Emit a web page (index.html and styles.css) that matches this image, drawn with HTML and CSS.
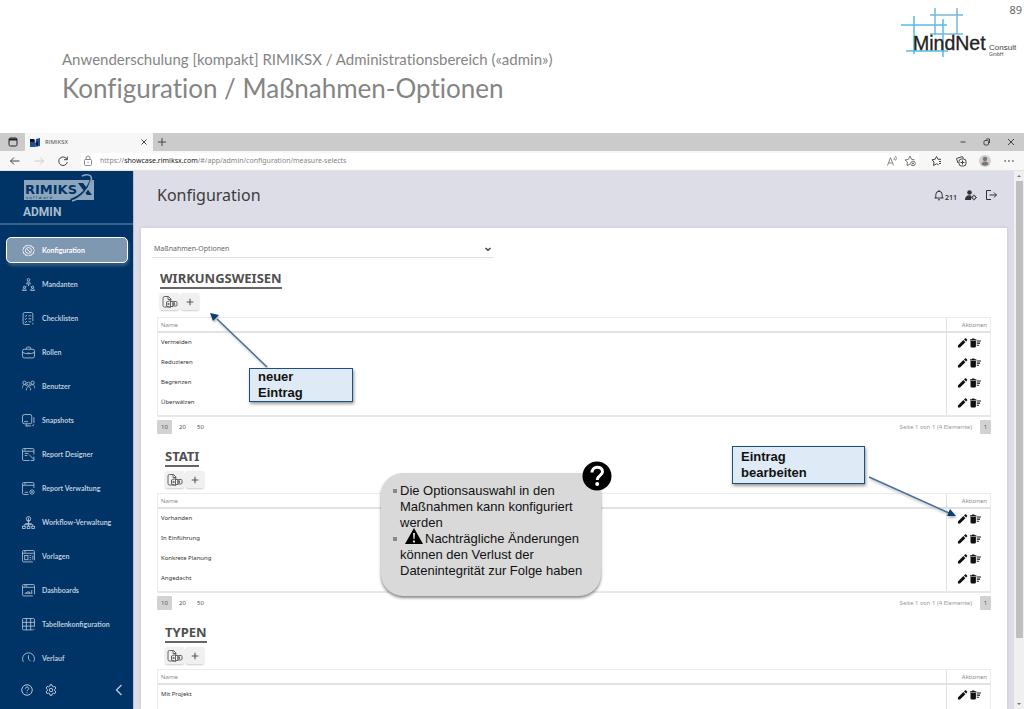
FILE: index.html
```html
<!DOCTYPE html>
<html lang="de">
<head>
<meta charset="utf-8">
<meta name="viewport" content="width=device-width, initial-scale=1">
<title>Konfiguration / Maßnahmen-Optionen</title>
<link rel="stylesheet" href="styles.css">
</head>
<body>
<svg class="sprite" aria-hidden="true">
  <symbol id="gear" viewBox="0 0 24 24"><path d="M12 1.5l2.2 2.3 3-1 1.200 2.900 3 .8-.1 3.200 2.200 2.300-2.200 2.300.1 3.200-3 .8-1.200 2.900-3-1-2.200 2.300-2.200-2.300-3 1-1.200-2.900-3-.8.1-3.200L.500 12l2.200-2.300-.1-3.200 3-.8 1.200-2.900 3 1z"/><circle cx="12" cy="12" r="5.500"/><path d="M9 9l6 6"/></symbol>
  <symbol id="mandanten" viewBox="0 0 24 24"><circle cx="12" cy="3.500" r="2.500"/><path d="M8.500 11c0-5 7-5 7 0zM12 11v4M8 15l-2 2M16 15l2 2"/><circle cx="4.500" cy="17" r="2"/><circle cx="19.500" cy="17" r="2"/><path d="M1 23c0-4.500 7-4.500 7 0zM16 23c0-4.500 7-4.500 7 0z"/></symbol>
  <symbol id="check" viewBox="0 0 24 24"><path d="M20 17V4a3 3 0 0 0-3-3H5a3 3 0 0 0-3 3v16a3 3 0 0 0 3 3h9M5 7l1.500 1.500L9 5.500M12 7h5M5 12.500L6.500 14 9 11M12 12.500h5M5 18l1.500 1.500L9 16.500M12 18h5M20 20v3"/></symbol>
  <symbol id="case" viewBox="0 0 24 24"><rect x="1" y="6" width="22" height="16" rx="3"/><path d="M8 6V4a2 2 0 0 1 2-2h4a2 2 0 0 1 2 2v2M1 12c7 3 15 3 22 0M10 13h4"/></symbol>
  <symbol id="users" viewBox="0 0 24 24"><circle cx="4.500" cy="5" r="3"/><circle cx="12" cy="7" r="3"/><circle cx="19.500" cy="5" r="3"/><path d="M0 16c0-6 3-7.500 5-7.500 2 0 3 1 4 2.500M24 16c0-6-3-7.500-5-7.500-2 0-3 1-4 2.500M8 19c0-9 8-9 8 0"/></symbol>
  <symbol id="snap" viewBox="0 0 24 24"><rect x="1" y="1" width="17" height="17" rx="3"/><path d="M6 22h11M22 6v11M19 22l3-3M8 18v2a2 2 0 0 0 2 2M4 14h7M21 22h1"/></symbol>
  <symbol id="designer" viewBox="0 0 24 24"><path d="M22 12V3a2 2 0 0 0-2-2H3a2 2 0 0 0-2 2v18a2 2 0 0 0 2 2h11M1 6h21M4 3.500h3M5 10h7M5 14h5M13 12l9 9M22 16v7h-6"/></symbol>
  <symbol id="verwalt" viewBox="0 0 24 24"><path d="M22 11V3a2 2 0 0 0-2-2H3a2 2 0 0 0-2 2v18a2 2 0 0 0 2 2h9M1 6h21M4 3.500h3M5 19h6"/><circle cx="18.500" cy="18.500" r="4"/><circle cx="18.500" cy="18.500" r="1"/></symbol>
  <symbol id="flow" viewBox="0 0 24 24"><circle cx="12" cy="5" r="4"/><path d="M12 3v13M9 8l3 3 3-3M6 14h12M4 19v-3h16v3M12 16v3"/><rect x="1" y="19" width="5" height="4"/><rect x="9.500" y="19" width="5" height="4"/><rect x="18" y="19" width="5" height="4"/></symbol>
  <symbol id="vorl" viewBox="0 0 24 24"><path d="M20 22H3a2 2 0 0 1-2-2V3a2 2 0 0 1 2-2h18a2 2 0 0 1 2 2v16M1 6h22M4 3.500h3M14 10h3M14 14h3M14 18h3M20 10v8"/><rect x="5" y="10" width="6" height="8"/></symbol>
  <symbol id="dash" viewBox="0 0 24 24"><path d="M20 22H3a2 2 0 0 1-2-2V3a2 2 0 0 1 2-2h18a2 2 0 0 1 2 2v16M1 6h22M4 3.500h6M8 17v-2M11 17v-4M14 17v-3M18 17v-6M5 17h14"/></symbol>
  <symbol id="grid" viewBox="0 0 24 24"><path d="M20 22H3a2 2 0 0 1-2-2V3a2 2 0 0 1 2-2h18a2 2 0 0 1 2 2v13M1 8h22M1 15h22M8 1v21M16 1v21M22 20v2"/></symbol>
  <symbol id="clock" viewBox="0 0 24 24"><path d="M5 21a11 11 0 1 1 14 0M12 6v7l4 4"/></symbol>
  <symbol id="help" viewBox="0 0 24 24"><circle cx="12" cy="12" r="10.500"/><path d="M8.500 9.500c0-4.500 7-4.500 7-.5 0 2.500-3.500 2.500-3.500 5M12 16.500v2"/></symbol>
  <symbol id="cog" viewBox="0 0 24 24"><circle cx="12" cy="12" r="3.500"/><path d="M10 1.500h4l.7 3.200 2 1.100 3.100-1 2 3.500-2.400 2.200v3l2.400 2.200-2 3.500-3.100-1-2 1.100-.7 3.200h-4l-.7-3.200-2-1.100-3.100 1-2-3.500 2.400-2.200v-3L2.200 8.300l2-3.500 3.100 1 2-1.100z"/></symbol>
  <symbol id="pencil" viewBox="0 0 24 24"><path fill="currentColor" stroke="none" d="M1 23v-5L14 5l5 5L6 23zM15.500 3.500L18 1c1-.8 1.800-.8 2.600 0L23 3.400c.8.8.8 1.600 0 2.600l-2.500 2.500z"/></symbol>
  <symbol id="trash" viewBox="0 0 26 24"><path fill="currentColor" stroke="none" d="M1 7h13v13a3 3 0 0 1-3 3H4a3 3 0 0 1-3-3zM0 3h4l1-2h5l1 2h4v3H0zM16 6h10v2.500H16zM16 11h8v2.500h-8zM16 16h5v2.500h-5z"/></symbol>
  <symbol id="excel" viewBox="0 0 32 24"><path d="M15 22H5a3 3 0 0 1-3-3V4a3 3 0 0 1 3-3h8l5 5v3M12 1v6h6M9 12l8-3v14l-8-3zM17 11h5v10h-5M11.500 14l3 4M14.500 14l-3 4"/><rect x="22" y="11" width="8" height="9" rx="2"/><path d="M25 13v5"/></symbol>
</svg>

<header class="slide-head">
  <div class="slide-titles">
    <p class="kicker">Anwenderschulung [kompakt] RIMIKSX / Administrationsbereich («admin»)</p>
    <h1 class="slide-title">Konfiguration / Maßnahmen-Optionen</h1>
  </div>
  <svg class="mindnet" viewBox="0 0 120 56" role="img" aria-label="MindNet Consult GmbH">
    <g stroke="#55bde6" stroke-width="1.500"><path d="M1 17h46M14 8v38M6 43h42M43 11v38"/><path stroke="#78b6da" d="M30 7h33M35 0v27M57 0v26M30 26h33"/></g>
    <text x="13" y="42" font-size="19.500" fill="#222" stroke="#222" stroke-width=".3">MindNet</text>
    <text x="89" y="42" font-size="8" fill="#444">Consult</text>
    <text x="89" y="48" font-size="5" fill="#444">GmbH</text>
  </svg>
  <span class="page-no">89</span>
</header>

<section class="browser">
  <div class="tabbar">
    <button class="tabmenu" aria-label="Tab-Aktionen"><svg viewBox="0 0 12 12"><rect x="2" y="2" width="8" height="8" rx="1.500"/><path stroke-width="2" d="M2 3.500h8"/></svg></button>
    <div class="tab">
      <svg class="favicon" viewBox="0 0 12 12"><path fill="#1e4f9a" stroke="none" d="M1 3h4l1 1v7H1zM7 3l4-1v8l-5 1z"/><path fill="#111" stroke="none" d="M1 3h4v3H1zM6 8l3-3v5z"/></svg>
      <span class="tab-name">RIMIKSX</span>
      <button class="ic" aria-label="Tab schließen"><svg viewBox="0 0 12 12"><path d="M3.500 3.500l5 5M8.500 3.500l-5 5"/></svg></button>
    </div>
    <button class="ic newtab" aria-label="Neuer Tab"><svg viewBox="0 0 12 12"><path d="M2 6h8M6 2v8"/></svg></button>
    <div class="winctl">
      <button class="ic" aria-label="Minimieren"><svg viewBox="0 0 12 12"><path d="M3.500 6h5"/></svg></button>
      <button class="ic" aria-label="Wiederherstellen"><svg viewBox="0 0 12 12"><rect x="3" y="4.500" width="4.500" height="4.500" rx="1"/><path d="M5 3h3.500v4"/></svg></button>
      <button class="ic" aria-label="Schließen"><svg viewBox="0 0 12 12"><path d="M3 3l6 6M9 3L3 9"/></svg></button>
    </div>
  </div>
  <div class="toolbar">
    <button class="ic" aria-label="Zurück"><svg viewBox="0 0 12 12"><path d="M10.500 6h-9M5 2.500L1.500 6 5 9.500"/></svg></button>
    <button class="ic pale" aria-label="Vorwärts"><svg viewBox="0 0 12 12"><path d="M1.500 6h9M7 2.500L10.500 6 7 9.500"/></svg></button>
    <button class="ic" aria-label="Neu laden"><svg viewBox="0 0 12 12"><path d="M10 4.500A4.300 4.300 0 1 0 10.300 7M10.300 1.500v3.200H7"/></svg></button>
    <div class="address">
      <svg class="lock" viewBox="0 0 12 12"><rect x="2.500" y="4.500" width="7" height="6" rx="1"/><path d="M4 4.500V3a2 2 0 0 1 4 0v1.500M6 7v1"/></svg>
      <div class="url" role="textbox" contenteditable="true" spellcheck="false" aria-label="Adresse">https://<b>showcase.rimiksx.com</b>/#/app/admin/configuration/measure-selects</div>
      <svg class="aloud" viewBox="0 0 12 12" role="img" aria-label="Laut vorlesen"><path d="M1.500 10.500L4.500 2.500l3 8M2.500 8h4M8 2.500q1 1 0 2.500M9.500 1q1.800 2.500 0 4.500"/></svg>
      <button class="ic grey" aria-label="Zu Favoriten hinzufügen"><svg viewBox="0 0 12 12"><path d="M6 9L3 10.500 3.500 7 1 5l3.300-.6L6 1l1.500 3.200 3 .6"/><circle cx="9" cy="8.500" r="2.300"/><path d="M9 7.500v2M8 8.500h2"/></svg></button>
    </div>
    <div class="tools">
      <button class="ic" aria-label="Favoriten"><svg viewBox="0 0 12 12"><path d="M7.500 9.800L5.500 8.800 2.500 10.500 3 7 1 4.800l3-.5L5.500 1.500 7 4.300h3M8 6.500h2M8 8.500h2"/></svg></button>
      <button class="ic" aria-label="Sammlungen"><svg viewBox="0 0 12 12"><path d="M3 8L1.500 3.500 7.500 1.500l.8 2"/><rect x="4" y="4" width="7" height="7" rx="2.500"/><path d="M7.500 5.500v4M5.500 7.500h4"/></svg></button>
      <button class="ic" aria-label="Profil"><svg viewBox="0 0 12 12"><circle cx="6" cy="6" r="6" fill="#cfcdc9" stroke="none"/><circle cx="6" cy="4" r="2.200" fill="#777" stroke="none"/><path d="M2.500 9.500c0-4 7-4 7 0-2 1.500-5 1.500-7 0z" fill="#777" stroke="none"/></svg></button>
      <button class="ic" aria-label="Mehr"><svg viewBox="0 0 12 12"><path stroke-width="1.300" d="M1.500 6h1.300M5.300 6h1.300M9.200 6h1.300"/></svg></button>
    </div>
  </div>

  <div class="app">
    <aside class="sidebar">
      <div class="brand">
        <svg class="logo" viewBox="0 0 72 30" role="img" aria-label="RIMIKSX software">
          <path fill="#8ea6bd" d="M1 6h70v20H1z"/>
          <text x="2" y="20" font-size="13" font-weight="700" fill="#003366">RIMIKS</text>
          <text x="3" y="25" font-size="4" fill="#003366">s o f t w a r e</text>
          <path fill="#003366" d="M55 9h5l9 12h-5zM47 25c10-3 18-12 20-20l2 1c-3 10-10 18-20 21z"/>
          <path d="M59 2c5-2 11-2 9 5-2 8-9 17-19 20" fill="none" stroke="#8ea6bd" stroke-width="1.500"/>
        </svg>
        <strong class="role">ADMIN</strong>
      </div>
      <nav class="menu">
        <a class="item active" href="#"><svg><use href="#gear"/></svg>Konfiguration</a>
        <a class="item" href="#"><svg><use href="#mandanten"/></svg>Mandanten</a>
        <a class="item" href="#"><svg><use href="#check"/></svg>Checklisten</a>
        <a class="item" href="#"><svg><use href="#case"/></svg>Rollen</a>
        <a class="item" href="#"><svg><use href="#users"/></svg>Benutzer</a>
        <a class="item" href="#"><svg><use href="#snap"/></svg>Snapshots</a>
        <a class="item" href="#"><svg><use href="#designer"/></svg>Report Designer</a>
        <a class="item" href="#"><svg><use href="#verwalt"/></svg>Report Verwaltung</a>
        <a class="item" href="#"><svg><use href="#flow"/></svg>Workflow-Verwaltung</a>
        <a class="item" href="#"><svg><use href="#vorl"/></svg>Vorlagen</a>
        <a class="item" href="#"><svg><use href="#dash"/></svg>Dashboards</a>
        <a class="item" href="#"><svg><use href="#grid"/></svg>Tabellenkonfiguration</a>
        <a class="item" href="#"><svg><use href="#clock"/></svg>Verlauf</a>
      </nav>
      <div class="side-foot">
        <button aria-label="Hilfe"><svg><use href="#help"/></svg></button>
        <button aria-label="Einstellungen"><svg><use href="#cog"/></svg></button>
        <button class="collapse" aria-label="Menü einklappen"><svg viewBox="0 0 12 12"><path stroke-width="1.300" d="M8.500 1L3.500 6l5 5"/></svg></button>
      </div>
    </aside>

    <main class="main">
      <div class="main-head">
        <h2 class="main-title">Konfiguration</h2>
        <div class="user">
          <button aria-label="Benachrichtigungen"><svg viewBox="0 0 12 12"><path d="M1.500 9h9M2.800 9V5.500a3.200 3.200 0 0 1 6.400 0V9M6 1v1.300M5 10.800h2"/></svg><span class="count">211</span></button>
          <button aria-label="Profil"><svg viewBox="0 0 12 12"><circle cx="4.500" cy="3.500" r="2.300" fill="currentColor" stroke="none"/><path fill="currentColor" stroke="none" d="M0 11c0-5 5-5.500 6.500-4L6 11z"/><circle cx="9" cy="8.500" r="1.800"/><path d="M9 5.700v1M9 10.300v1M6.300 8.500h1M10.800 8.500h1"/></svg></button>
          <button aria-label="Abmelden"><svg viewBox="0 0 12 12"><path d="M6 1.500H1.500v9H6M4.500 6h7M9 3.500L11.500 6 9 8.500"/></svg></button>
        </div>
      </div>
      <div class="panel">
        <div class="picker">
          <select aria-label="Bereich"><option>Maßnahmen-Optionen</option></select>
          <svg viewBox="0 0 12 12"><path stroke-width="1.500" d="M3.500 5L6 7.300 8.500 5"/></svg>
        </div>

        <section class="group first">
          <h3>WIRKUNGSWEISEN</h3>
          <div class="acts"><button aria-label="Excel-Export"><svg class="xl"><use href="#excel"/></svg></button><button aria-label="Neuer Eintrag"><svg viewBox="0 0 12 12"><path stroke-width="1.300" d="M2 6h8M6 2v8"/></svg></button></div>
          <table>
            <thead><tr><th>Name</th><th class="act">Aktionen</th></tr></thead>
            <tbody>
              <tr><td>Vermeiden</td><td class="act"><button aria-label="Bearbeiten"><svg><use href="#pencil"/></svg></button><button aria-label="Löschen"><svg><use href="#trash"/></svg></button></td></tr>
              <tr><td>Reduzieren</td><td class="act"><button aria-label="Bearbeiten"><svg><use href="#pencil"/></svg></button><button aria-label="Löschen"><svg><use href="#trash"/></svg></button></td></tr>
              <tr><td>Begrenzen</td><td class="act"><button aria-label="Bearbeiten"><svg><use href="#pencil"/></svg></button><button aria-label="Löschen"><svg><use href="#trash"/></svg></button></td></tr>
              <tr><td>Überwälzen</td><td class="act"><button aria-label="Bearbeiten"><svg><use href="#pencil"/></svg></button><button aria-label="Löschen"><svg><use href="#trash"/></svg></button></td></tr>
            </tbody>
          </table>
          <div class="pager"><button class="on">10</button><button>20</button><button>50</button><span>Seite 1 von 1 (4 Elemente)</span><button class="on page">1</button></div>
        </section>

        <section class="group">
          <h3>STATI</h3>
          <div class="acts"><button aria-label="Excel-Export"><svg class="xl"><use href="#excel"/></svg></button><button aria-label="Neuer Eintrag"><svg viewBox="0 0 12 12"><path stroke-width="1.300" d="M2 6h8M6 2v8"/></svg></button></div>
          <table>
            <thead><tr><th>Name</th><th class="act">Aktionen</th></tr></thead>
            <tbody>
              <tr><td>Vorhanden</td><td class="act"><button aria-label="Bearbeiten"><svg><use href="#pencil"/></svg></button><button aria-label="Löschen"><svg><use href="#trash"/></svg></button></td></tr>
              <tr><td>In Einführung</td><td class="act"><button aria-label="Bearbeiten"><svg><use href="#pencil"/></svg></button><button aria-label="Löschen"><svg><use href="#trash"/></svg></button></td></tr>
              <tr><td>Konkrete Planung</td><td class="act"><button aria-label="Bearbeiten"><svg><use href="#pencil"/></svg></button><button aria-label="Löschen"><svg><use href="#trash"/></svg></button></td></tr>
              <tr><td>Angedacht</td><td class="act"><button aria-label="Bearbeiten"><svg><use href="#pencil"/></svg></button><button aria-label="Löschen"><svg><use href="#trash"/></svg></button></td></tr>
            </tbody>
          </table>
          <div class="pager"><button class="on">10</button><button>20</button><button>50</button><span>Seite 1 von 1 (4 Elemente)</span><button class="on page">1</button></div>
        </section>

        <section class="group">
          <h3>TYPEN</h3>
          <div class="acts"><button aria-label="Excel-Export"><svg class="xl"><use href="#excel"/></svg></button><button aria-label="Neuer Eintrag"><svg viewBox="0 0 12 12"><path stroke-width="1.300" d="M2 6h8M6 2v8"/></svg></button></div>
          <table>
            <thead><tr><th>Name</th><th class="act">Aktionen</th></tr></thead>
            <tbody>
              <tr><td>Mit Projekt</td><td class="act"><button aria-label="Bearbeiten"><svg><use href="#pencil"/></svg></button><button aria-label="Löschen"><svg><use href="#trash"/></svg></button></td></tr>
              <tr><td></td><td class="act"></td></tr>
            </tbody>
          </table>
        </section>
      </div>
    </main>
    <div class="scroll" aria-hidden="true"><svg viewBox="0 0 10 10"><path d="M3 6l2-2 2 2z"/></svg><span class="thumb"></span><svg viewBox="0 0 10 10"><path d="M3 4l2 2 2-2z"/></svg></div>
  </div>
</section>

<svg class="arrow arrow-new" viewBox="0 0 62 58" aria-hidden="true"><path d="M57 54L7 6" stroke="#466f9b" stroke-width="1.500"/><path fill="#0b3d70" d="M0 0l9 2-6 6z"/></svg>
<svg class="arrow arrow-edit" viewBox="0 0 92 46" aria-hidden="true"><path d="M2 2l80 36" stroke="#466f9b" stroke-width="1.500"/><path fill="#0b3d70" d="M89 41l-9 0 3-7z"/></svg>
<div class="note note-new">neuer<br>Eintrag</div>
<div class="note note-edit">Eintrag<br>bearbeiten</div>
<div class="bubble">
  <ul>
    <li>Die Optionsauswahl in den<br>Maßnahmen kann konfiguriert<br>werden</li>
    <li><svg class="warn" viewBox="0 0 18 16"><path d="M9 0l9 16H0z"/><path fill="#d9d9d9" d="M8 5h2l-.4 6H8.400zM8 12.500h2v2H8z"/></svg>Nachträgliche Änderungen<br>können den Verlust der<br>Datenintegrität zur Folge haben</li>
  </ul>
  <svg class="qmark" viewBox="0 0 30 30" aria-hidden="true"><circle cx="15" cy="15" r="14.500"/><path d="M10 11.500c0-7 10.500-7 10.500-.8 0 4-5.300 4-5.300 8.300" fill="none" stroke="#fff" stroke-width="3"/><circle cx="15.200" cy="23" r="2" fill="#fff"/></svg>
</div>
</body>
</html>
```
FILE: styles.css
```css
* { box-sizing: border-box; }
body {
  position: relative;
  margin: 0;
  height: 100vh;
  overflow: hidden;
  display: flex;
  flex-direction: column;
  background: #fff;
  font-family: "Noto Sans", "Open Sans", sans-serif;
  color: #444;
}
button { margin: 0; padding: 0; border: 0; background: none; font: inherit; color: inherit; display: inline-flex; align-items: center; justify-content: center; }
svg { display: block; fill: none; stroke: currentColor; }
.sprite { display: none; }
h1, h2, h3, p, ul { margin: 0; padding: 0; }

/* Slide header */
.slide-head { flex: none; display: flex; align-items: flex-start; height: 133px; padding-left: 62px; }
.slide-titles { flex: 1; padding-top: 49px; font-family: Lato, sans-serif; font-variant-ligatures: none; color: #858585; }
.kicker { font-size: 15px; line-height: 20px; }
.slide-title { font-size: 26px; line-height: 38px; font-weight: 400; }
.mindnet { width: 120px; height: 56px; margin-top: 8px; margin-right: -11px; stroke: none; font-family: "Liberation Sans", sans-serif; }
.page-no { padding: 2px 2px 0 0; font-size: 11px; line-height: 16px; color: #666; }

/* Browser frame */
.browser { flex: 1; min-height: 0; display: flex; flex-direction: column; }
.ic svg { width: 12px; height: 12px; color: #444; }
.ic.pale svg { color: #ccc; }
.ic.grey svg { color: #777; }
.tabbar { flex: none; display: flex; align-items: center; height: 18px; background: #cbcbcb; }
.tabmenu { width: 25px; }
.tabmenu svg { width: 12px; height: 12px; color: #222; }
.tab { display: flex; align-items: center; gap: 4px; width: 128px; height: 18px; padding: 0 3px 0 4px; background: #f7f7f7; }
.favicon { width: 12px; height: 12px; }
.tab-name { flex: 1; font-family: "Open Sans", sans-serif; font-size: 6px; line-height: 12px; }
.newtab { margin-left: 3px; }
.winctl { display: flex; gap: 12px; margin-left: auto; padding-right: 7px; }
.toolbar { flex: none; display: flex; align-items: center; gap: 12px; height: 20px; padding: 0 9px; background: #f7f7f7; border-bottom: 1px solid #e4e4e4; }
.address { flex: 1; display: flex; align-items: center; height: 16px; padding: 0 3px 0 1px; gap: 6px; background: #fff; }
.lock { width: 12px; height: 12px; color: #888; }
.url { flex: 1; font-size: 7px; line-height: 12px; color: #858585; }
.url b { font-weight: 400; color: #222; }
.aloud { width: 12px; height: 12px; color: #888; }
.tools { display: flex; gap: 12px; }

/* Application */
.app { flex: 1; min-height: 0; display: flex; }
.sidebar { flex: none; display: flex; flex-direction: column; width: 134px; background: #003366; border-right: 1px solid #b9c0d6; color: #bccbda; }
.brand { flex: none; height: 54px; padding: 3px 24px 0 23px; border-bottom: 2px solid #34608a; }
.logo { width: 72px; height: 30px; stroke: none; font-family: "DejaVu Sans", sans-serif; }
.role { display: block; font-family: Roboto, sans-serif; font-size: 12px; line-height: 16px; color: #a9bccf; }
.menu { flex: 1; min-height: 0; overflow: hidden; display: flex; flex-direction: column; gap: 8px; padding: 12px 5px 0 6px; }
.item { flex: none; display: flex; align-items: center; gap: 7px; height: 26px; padding-left: 15px; border: 1px solid transparent; border-radius: 5px; font-family: Lato, sans-serif; font-size: 7px; line-height: 12px; font-weight: 700; color: #bccbda; text-decoration: none; }
.item svg { width: 13px; height: 13px; stroke-width: 1.5; }
.item.active { background: #7f98b2; border-color: #fff; color: #fff; box-shadow: 1px 3px 3px #33597f; }
.side-foot { flex: none; display: flex; align-items: center; gap: 12px; height: 47px; padding: 8px 8px 0 21px; }
.side-foot svg { width: 12px; height: 12px; stroke-width: 2; }
.side-foot .collapse { margin-left: auto; }

.main { flex: 1; min-width: 0; display: flex; flex-direction: column; background: #dddde8; padding: 0 7px; }
.main-head { flex: none; display: flex; align-items: center; justify-content: space-between; height: 57px; padding: 0 10px 10px 16px; }
.main-title { font-size: 16px; line-height: 24px; font-weight: 400; color: #3c3c3c; }
.user { display: flex; gap: 8px; color: #333; }
.user svg { width: 12px; height: 12px; }
.count { padding-top: 6px; font-size: 7px; line-height: 10px; font-weight: 600; }
.panel { flex: 1; min-height: 0; overflow: hidden; background: #fff; padding: 12px 16px 0; box-shadow: 0 0 3px #c4c4d2; }
.picker { display: grid; width: 41%; height: 18px; margin-left: -5px; border-bottom: 1px solid #e2e2e2; align-items: center; }
.picker select, .picker svg { grid-area: 1 / 1; }
.picker select { appearance: none; width: 100%; padding: 0 2px; border: 0; background: none; font-family: "Noto Sans", sans-serif; font-size: 7px; line-height: 16px; color: #666; }
.picker svg { width: 12px; height: 12px; justify-self: end; color: #444; pointer-events: none; }

.group { padding-top: 13px; }
.group.first { padding-top: 11px; }
.group h3 { width: max-content; margin-left: 8px; border-bottom: 2px solid #666; font-size: 13px; line-height: 18px; font-weight: 700; color: #505050; }
.acts { display: flex; gap: 2px; margin: 4px 0 5px 8px; }
.group.first h3 { margin-left: 3px; }
.group.first .acts { margin-left: 3px; margin-bottom: 7px; }
.acts button { width: 18px; height: 17px; border-radius: 2px; background: #f0f0f0; box-shadow: 0 1px 2px #ccc; color: #555; }
.acts button:first-child { width: 19px; }
.acts svg { width: 10px; height: 10px; }
.acts .xl { width: 16px; height: 12px; stroke-width: 1.8; }
table { width: 100%; border: 1px solid #ececec; border-bottom: 2px solid #e8e8e8; border-spacing: 0; font-size: 6px; line-height: 10px; color: #333; }
th { height: 15px; padding: 0 3px; border-bottom: 2px solid #e2e2e2; font-weight: 400; text-align: left; color: #8c8c8c; }
td { height: 20px; padding: 0 3px 3px; }
.act { width: 44px; border-left: 1px solid #e0e0e0; text-align: right; white-space: nowrap; }
td.act { padding: 0 9px 0 0; color: #111; }
tr:last-child td { height: 22px; padding-bottom: 5px; }
tr:last-child td.act { padding-bottom: 2px; }
td.act button { vertical-align: middle; }
td.act button + button { margin-left: 2px; }
td.act svg { width: 11px; height: 10px; }
.pager { display: flex; align-items: center; gap: 3px; margin-top: 3px; font-size: 6px; line-height: 10px; color: #555; }
.pager button { width: 15px; height: 14px; }
.pager .on { background: #d2d2d2; border-radius: 1px; }
.pager span { margin-left: auto; padding-right: 5px; color: #999; }
.pager .page { width: 11px; }

.scroll { flex: none; width: 10px; display: flex; flex-direction: column; background: #f0f0f0; }
.scroll svg { flex: none; width: 10px; height: 10px; fill: #777; stroke: none; }
.scroll .thumb { flex: 0 0 85%; margin: 0 1px 0 2px; background: #bfbfbf; }
.scroll svg:last-child { margin-top: auto; }

/* Annotations over the page */
.note, .bubble, .arrow { position: absolute; font-family: "Liberation Sans", Arial, sans-serif; font-size: 13px; line-height: 16px; color: #111; }
.note { padding: 0 8px; background: #deebf7; border: 1px solid #1f4e79; box-shadow: 1px 2px 3px #999; font-weight: 700; white-space: nowrap; }
.note-new { left: 249px; top: 368px; width: 104px; height: 34px; }
.note-edit { left: 732px; top: 446px; width: 133px; height: 38px; padding-top: 2px; }
.arrow { stroke: none; filter: drop-shadow(1px 2px 1px #bbb); }
.arrow-new { left: 210px; top: 313px; width: 62px; height: 58px; }
.arrow-edit { left: 867px; top: 475px; width: 92px; height: 46px; }
.bubble { left: 381px; top: 473px; width: 220px; height: 123px; padding: 10px 4px 0 19px; background: #d9d9d9; border-radius: 22px; box-shadow: 0 2px 3px #888; white-space: nowrap; }
.bubble ul { list-style: none; }
.bubble li::before { content: ""; float: left; width: 4px; height: 4px; margin: 6px 0 0 -7px; background: #888; }
.warn { display: inline-block; width: 18px; height: 16px; margin: -3px 2px 3px 5px; vertical-align: bottom; fill: #000; stroke: none; }
.qmark { position: absolute; right: -11px; top: -12px; width: 30px; height: 30px; fill: #000; stroke: none; }
```
